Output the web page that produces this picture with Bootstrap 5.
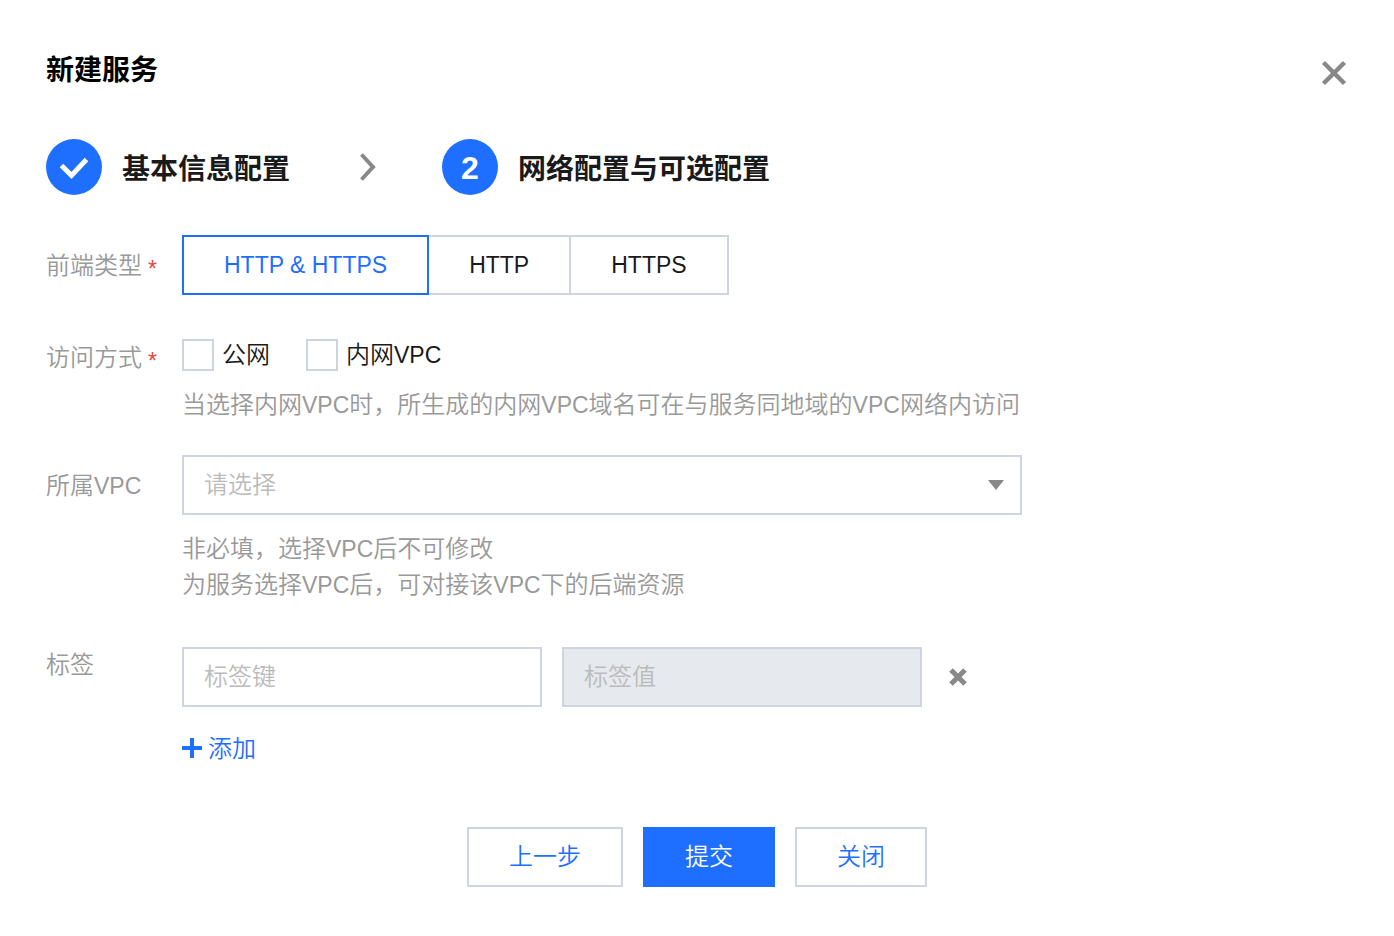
<!DOCTYPE html>
<html lang="zh-CN">
<head>
<meta charset="utf-8">
<meta name="viewport" content="width=device-width, initial-scale=1">
<title>新建服务</title>
<link href="https://cdn.jsdelivr.net/npm/bootstrap@5.3.0/dist/css/bootstrap.min.css" rel="stylesheet">
<style>
:root { --brand: #1e6fff; --line: #cfd5e0; --ink: #1a1a1a; --muted: #999; --icon: #888; }
body { font-family: "Liberation Sans", "Noto Sans CJK SC", sans-serif; font-size: 24px; line-height: 36px; font-weight: 350; color: var(--ink); background: #fff; }
.dialog-page { padding: 48px 46px; }
.dialog-title { font-size: 28px; line-height: 46px; font-weight: 700; color: #000; }
.icon-btn { border: 0; background: none; padding: 0; line-height: 0; color: var(--icon); }
.steps { margin: 45px 0 40px; font-size: 28px; line-height: 40px; font-weight: 700; }
.step-name { padding-top: 6px; }
.step-mark { width: 56px; height: 56px; border-radius: 50%; background: var(--brand); color: #fff; margin-right: 20px; font-size: 32px; padding-top: 2px; }
.step-done { padding-top: 0; }
.step-arrow { margin: 0 64px 0 68px; color: var(--icon); }
.field-type { margin-bottom: 42px; }
.field-access { margin-bottom: 32px; }
.field-vpc { margin-bottom: 44px; }
.field-name { width: 136px; flex: none; color: var(--muted); }
.field-tall { padding-top: 13px; }
.field-access .field-name { padding-top: 3px; }
.required { color: #e54545; font-size: 23px; line-height: 1; vertical-align: -3px; margin-left: 6px; }
.latin { font-size: 23px; }
.seg { height: 60px; padding: 10px 40px; border: 2px solid var(--line); font-size: 23px; line-height: 36px; cursor: pointer; position: relative; }
.seg-group .seg { margin-right: -2px; }
.btn-check:checked + .seg { border-color: var(--brand); color: var(--brand); z-index: 1; }
.tick { appearance: none; width: 32px; height: 32px; margin: 0 8px 0 0; border: 2px solid var(--line); background: #fff; }
.tick:checked { background: var(--brand); border-color: var(--brand); }
.tick-item { margin-right: 36px; }
.hint { color: var(--muted); margin-top: 16px; }
.field-access .hint { margin-top: 14px; }
.field-body { max-width: 840px; }
.box { height: 60px; width: 100%; border: 2px solid var(--line); border-radius: 0; padding: 10px 20px; background: #fff; font-weight: 350; color: var(--ink); line-height: 36px; }
.box::placeholder { color: #bbb; opacity: 1; }
.box:disabled { background: #e6e9ee; }
.box-tag { width: 360px; }
.tag-value { margin: 0 27px 0 20px; }
select.box { appearance: none; color: #bbb; background: #fff url("data:image/svg+xml,%3Csvg xmlns='http://www.w3.org/2000/svg' width='16' height='10'%3E%3Cpath d='M0 0h16L8 10z' fill='%23888'/%3E%3C/svg%3E") no-repeat right 16px center; }
.add-link { color: var(--brand); text-decoration: none; width: fit-content; }
.form-actions { gap: 20px; margin-top: 60px; }
.action { height: 60px; padding: 10px 40px; border: 2px solid var(--line); background: #fff; color: var(--brand); font-weight: 350; line-height: 36px; }
.action-main { background: var(--brand); border-color: var(--brand); color: #fff; }
</style>
</head>
<body>
<main class="dialog-page">
  <header class="d-flex justify-content-between align-items-start">
    <h1 class="dialog-title m-0">新建服务</h1>
    <button type="button" class="icon-btn mt-2" aria-label="关闭窗口">
      <svg width="28" height="32" viewBox="0 0 28 32" fill="none" stroke="currentColor" stroke-width="4.500"><path d="M3.500 6.500 24.500 27.500M24.500 6.500 3.500 27.500"/></svg>
    </button>
  </header>

  <div class="steps d-flex align-items-center">
    <span class="step-mark step-done d-flex align-items-center justify-content-center">
      <svg width="56" height="56" viewBox="0 0 56 56" fill="none" stroke="#fff" stroke-width="5"><path d="m15.500 26.500 10 10L40.500 20.500"/></svg>
    </span>
    <span class="step-name">基本信息配置</span>
    <svg class="step-arrow" width="20" height="28" viewBox="0 0 20 28" fill="none" stroke="currentColor" stroke-width="4"><path d="M3.500 1.500 15 14 3.500 26.500"/></svg>
    <span class="step-mark d-flex align-items-center justify-content-center">2</span>
    <span class="step-name">网络配置与可选配置</span>
  </div>

  <form>
    <div class="field-type d-flex">
      <div class="field-name field-tall" id="front">前端类型<span class="required">*</span></div>
      <div class="seg-group d-flex" role="radiogroup" aria-labelledby="front">
        <input class="btn-check" type="radio" name="front" id="f1" checked><label class="seg" for="f1">HTTP &amp; HTTPS</label>
        <input class="btn-check" type="radio" name="front" id="f2"><label class="seg" for="f2">HTTP</label>
        <input class="btn-check" type="radio" name="front" id="f3"><label class="seg" for="f3">HTTPS</label>
      </div>
    </div>

    <div class="field-access d-flex">
      <div class="field-name" id="access">访问方式<span class="required">*</span></div>
      <div role="group" aria-labelledby="access">
        <div class="d-flex">
          <div class="tick-item d-flex align-items-center"><input class="tick" type="checkbox" id="pub"><label for="pub">公网</label></div>
          <div class="tick-item d-flex align-items-center"><input class="tick" type="checkbox" id="inner"><label for="inner">内网<span class="latin">VPC</span></label></div>
        </div>
        <div class="hint">当选择内网<span class="latin">VPC</span>时，所生成的内网<span class="latin">VPC</span>域名可在与服务同地域的<span class="latin">VPC</span>网络内访问</div>
      </div>
    </div>

    <div class="field-vpc d-flex">
      <label class="field-name field-tall" for="vpc">所属<span class="latin">VPC</span></label>
      <div class="field-body flex-grow-1">
        <select class="box d-block" id="vpc"><option>请选择</option></select>
        <div class="hint">非必填，选择<span class="latin">VPC</span>后不可修改<br>为服务选择<span class="latin">VPC</span>后，可对接该<span class="latin">VPC</span>下的后端资源</div>
      </div>
    </div>

    <div class="d-flex">
      <label class="field-name" for="tagkey">标签</label>
      <div>
        <div class="d-flex align-items-center">
          <input class="box box-tag" type="text" id="tagkey" placeholder="标签键">
          <input class="box box-tag tag-value" type="text" placeholder="标签值" aria-label="标签值" disabled>
          <button type="button" class="icon-btn" aria-label="删除标签">
            <svg width="18" height="18" viewBox="0 0 18 18" fill="none" stroke="currentColor" stroke-width="5"><path d="m2 2 14 14M16 2 2 16"/></svg>
          </button>
        </div>
        <a href="#" class="add-link d-flex align-items-center mt-4">
          <svg class="me-1" width="22" height="22" viewBox="0 0 22 22" fill="none" stroke="currentColor" stroke-width="4"><path d="M0 10h20M10 0v20"/></svg>添加
        </a>
      </div>
    </div>

    <div class="form-actions d-flex justify-content-center">
      <button type="button" class="action">上一步</button>
      <button type="submit" class="action action-main">提交</button>
      <button type="button" class="action">关闭</button>
    </div>
  </form>
</main>
<script src="https://cdn.jsdelivr.net/npm/bootstrap@5.3.0/dist/js/bootstrap.bundle.min.js"></script>
</body>
</html>
